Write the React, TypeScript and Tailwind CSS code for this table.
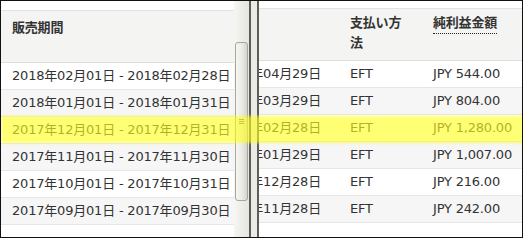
import React from "react";

const leftRows = [
  "2018年02月01日 - 2018年02月28日",
  "2018年01月01日 - 2018年01月31日",
  "2017年12月01日 - 2017年12月31日",
  "2017年11月01日 - 2017年11月30日",
  "2017年10月01日 - 2017年10月31日",
  "2017年09月01日 - 2017年09月30日",
];

const rightRows = [
  { date: "2018年04月29日", method: "EFT", amount: "JPY 544.00" },
  { date: "2018年03月29日", method: "EFT", amount: "JPY 804.00" },
  { date: "2018年02月28日", method: "EFT", amount: "JPY 1,280.00" },
  { date: "2018年01月29日", method: "EFT", amount: "JPY 1,007.00" },
  { date: "2017年12月28日", method: "EFT", amount: "JPY 216.00" },
  { date: "2017年11月28日", method: "EFT", amount: "JPY 242.00" },
];

const font = {
  fontFamily: '"DejaVu Sans", "Noto Sans CJK JP", sans-serif',
};

export default function App() {
  return (
    <div className="w-[527px] h-[240px] bg-white" style={font}>
      <div className="relative w-[523px] h-[238px] border border-[#111] flex overflow-hidden text-[13px] text-[#333] tracking-[-0.2px]">
        {/* Left pane */}
        <div className="w-[233px] flex flex-col">
          <div className="h-[10px] bg-white border-b border-[#e2e2e2]" />
          <div className="h-[52px] bg-[#f4f4f2] border-b border-[#dedede] pl-[11px] pt-[7px] font-bold text-[#333] leading-[20px]">
            販売期間
          </div>
          {leftRows.map((r, i) => (
            <div
              key={r}
              className={`h-[27px] border-b border-[#e6e6e6] flex items-center pl-[11px] whitespace-nowrap ${
                i % 2 === 1 ? "bg-[#f6f6f6]" : "bg-white"
              }`}
            >
              {r}
            </div>
          ))}
        </div>
        {/* Scrollbar */}
        <div className="w-[15px] bg-gradient-to-r from-[#f6f6f2] to-[#e6e6e0] flex flex-col pt-[41px]">
          <div className="h-[159px] mx-[1px] rounded-[3px] border border-[#a6a69f] bg-gradient-to-r from-[#f6f6f2] via-[#ecece6] to-[#d6d6ce] flex flex-col items-center justify-center gap-[1px]">
            <div className="w-[5px] h-[1px] bg-[#6e6e68]" />
            <div className="w-[5px] h-[1px] bg-[#6e6e68]" />
            <div className="w-[5px] h-[1px] bg-[#6e6e68]" />
          </div>
        </div>
        {/* Divider */}
        <div className="w-[2px] bg-[#5e5e59]" />
        <div className="w-[6px] bg-[#ebebe6]" />
        <div className="w-[2px] bg-[#5e5e59]" />
        {/* Right pane */}
        <div className="flex-1 overflow-hidden">
          <div className="ml-[-52px] w-[315px] flex flex-col">
            <div className="h-[8px] bg-white border-b border-[#e2e2e2]" />
            <div className="h-[52px] bg-[#f4f4f2] border-b border-[#dedede] flex font-bold leading-[20px] pt-[4px]">
              <div className="w-[132px]" />
              <div className="w-[83px] pl-[11px] pr-[14px]">支払い方法</div>
              <div className="flex-1 pl-[11px]">
                <span className="inline-block border-b border-dotted border-[#222] pb-[2px] leading-[17px]">
                  純利益金額
                </span>
              </div>
            </div>
            {rightRows.map((r, i) => (
              <div
                key={r.date}
                className={`h-[27px] border-b border-[#e6e6e6] flex items-center whitespace-nowrap ${
                  i % 2 === 1 ? "bg-[#f6f6f6]" : "bg-white"
                }`}
              >
                <div className="w-[132px] pl-[11px]">{r.date}</div>
                <div className="w-[83px] pl-[11px]">{r.method}</div>
                <div className="flex-1 pl-[11px]">{r.amount}</div>
              </div>
            ))}
          </div>
        </div>
        {/* Highlighter */}
        <div className="absolute left-0 top-[115px] w-[523px] h-[27px] bg-[rgba(255,255,30,0.62)] blur-[1.5px] pointer-events-none" />
      </div>
    </div>
  );
}
